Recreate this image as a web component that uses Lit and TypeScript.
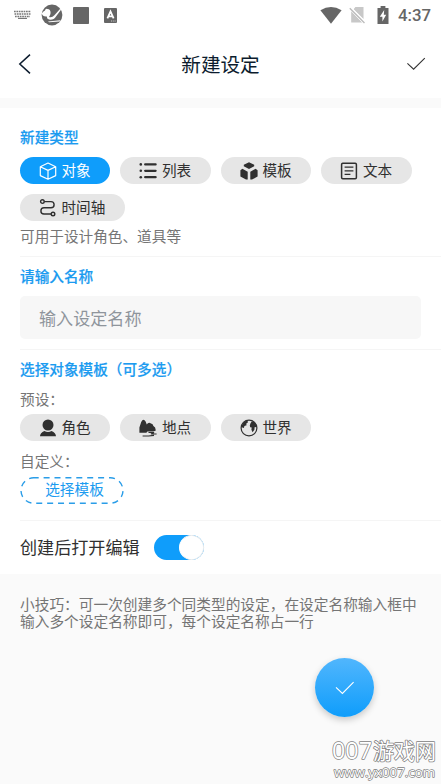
import { LitElement, html, css, svg } from "lit";
import { customElement, property } from "lit/decorators.js";

const icons: Record<string, unknown> = {
  cube: svg`<path d="M9 1 16.7 4.8V13.6L9 17.2 1.3 13.6V4.8ZM1.3 4.8 9 8.4 16.7 4.8M9 8.4V17.2" fill="none" stroke="currentColor" stroke-width="1.2" stroke-linejoin="round"/>`,
  list: svg`<path d="M6.2 2.4H16.6M6.2 8.8H16.6M6.2 15.2H16.6" stroke="currentColor" stroke-width="2.3" stroke-linecap="round"/><circle cx="1.8" cy="2.4" r="1.3"/><circle cx="1.8" cy="8.8" r="1.3"/><circle cx="1.8" cy="15.2" r="1.3"/>`,
  blocks: svg`<path d="M9 .2 14.2 2.8V4.2L9 7 3.8 4.2V2.8ZM.4 8.2 2.4 6.8 7.7 9.8V17.4H6L.4 14.6ZM17.6 8.2 15.6 6.8 10.3 9.8V17.4H12L17.6 14.6Z"/>`,
  doc: svg`<rect x="1.6" y="1.2" width="14.8" height="15.6" rx="1.2" fill="none" stroke="currentColor" stroke-width="1.5"/><path d="M4.6 5.2H13.4M4.6 8.8H13.4M4.6 12.4H10.4" stroke="currentColor" stroke-width="1.3"/>`,
  timeline: svg`<g fill="none" stroke="currentColor" stroke-width="1.4"><circle cx="3.4" cy="2.6" r="1.8"/><circle cx="14" cy="15" r="1.8"/><path d="M5.2 2.6H12A3.1 3.1 0 0 1 12 8.8H5A3.1 3.1 0 0 0 5 15H12.2"/></g>`,
  person: svg`<circle cx="9" cy="6" r="5.5"/><path d="M1 17.3C1 14.8 2.6 13.1 5.4 11.9Q9 14 12.6 11.9C15.4 13.1 17 14.8 17 17.3Z"/>`,
  place: svg`<path d="M.4 13.8V8.6L2.2 3Q4.4-1.5 6.6 2.6L7.8 5.6Q9.2 2.9 12 4.4Q14 4.5 14.4 7Q17 8 16.6 11.8L14.2 12.6H8.4L7.4 13.8Z"/><path d="M9.5 13.5H15L12 15H17.6M3.6 17H9.5L15 16.4" fill="none" stroke="currentColor" stroke-width="1.2"/>`,
  globe: svg`<circle cx="9" cy="9" r="7.9" fill="none" stroke="currentColor" stroke-width="1.2"/><path d="M2 6Q4 1.8 7.4 1.4L8 3.3 6.2 4.8 6.6 6.3 4.4 7.1 3.9 9.1 1.5 8.2ZM10.4 4.4 11.8 2.3 14.3 3 16.7 6.6 16.2 8 14.6 8.2 14.4 10.7 12.6 13.2 11.4 10.8 11.7 8.6 10.2 8.3 9.8 6.4Z"/>`,
};

@customElement("type-chip")
class TypeChip extends LitElement {
  @property() icon = "";
  @property() label = "";
  @property({ type: Boolean, reflect: true }) active = false;

  static styles = css`
    :host {
      display: flex;
      align-items: center;
      box-sizing: border-box;
      height: 27px;
      padding: 0 19.8px 0 18.9px;
      border-radius: 14px;
      background: #e6e6e6;
      color: #303030;
      font-size: 14.6px;
      line-height: 25px;
      white-space: nowrap;
    }
    :host([active]) {
      background: #0f9dfb;
      color: #fff;
    }
    svg {
      width: 18px;
      height: 18px;
      margin-right: 4.6px;
      fill: currentColor;
      flex: none;
    }
    span {
      height: 27px;
    }
  `;

  render() {
    return html`<svg viewBox="0 0 18 18">${icons[this.icon]}</svg><span>${this.label}</span>`;
  }
}

@customElement("app-root")
class AppRoot extends LitElement {
  static styles = css`
    :host {
      display: flex;
      flex-direction: column;
      position: relative;
      height: 784px;
      overflow: hidden;
      background: #fafafa;
      font-family: "Noto Sans CJK SC", sans-serif;
      color: #303030;
    }
    svg {
      display: block;
      flex: none;
    }
    .status {
      display: flex;
      align-items: center;
      justify-content: space-between;
      height: 30px;
      background: #fff;
      padding: 0 10px 0 14px;
    }
    .left,
    .right {
      display: flex;
      align-items: center;
      color: #666;
      fill: currentColor;
    }
    .bird {
      margin-left: 10px;
    }
    .square {
      margin-left: 10px;
    }
    .letter {
      margin-left: 15px;
    }
    .sim {
      margin-left: 7px;
    }
    .battery {
      margin-left: 11px;
    }
    .clock {
      font: 500 16.8px/30px Roboto, sans-serif;
      margin-left: 9px;
    }
    .header {
      display: flex;
      align-items: center;
      justify-content: space-between;
      height: 68px;
      background: #fff;
      padding: 0 15px 0 18px;
    }
    .title {
      font-size: 19.6px;
      line-height: 68px;
      height: 68px;
      color: #0c1c2e;
      margin-left: 3px;
    }
    .form {
      margin-top: 10px;
      height: 466px;
      box-sizing: border-box;
      padding: 19px 0 0 20px;
      background: #fff;
    }
    .heading {
      font-size: 14.65px;
      line-height: 20px;
      font-weight: 500;
      color: #1b9bf0;
      -webkit-text-stroke: 0.2px #1b9bf0;
    }
    .chips {
      display: flex;
      flex-wrap: wrap;
      gap: 10px;
      margin-top: 10px;
    }
    .heading.next {
      margin-top: 9px;
    }
    .hint {
      font-size: 14.65px;
      line-height: 20px;
      margin-top: 10px;
      color: #757575;
    }
    .hint.about {
      margin: 5px 0 10px;
    }
    .chips.presets {
      margin-top: 5px;
    }
    .rule {
      height: 1px;
      background: #f5f5f5;
    }
    .rule.last {
      margin-top: 16px;
    }
    .input {
      margin: 10px 20px 10px 0;
      height: 43px;
      box-sizing: border-box;
      padding-left: 19px;
      border-radius: 5px;
      background: #f7f7f7;
      font-size: 17.1px;
      line-height: 43px;
      color: #8f959c;
    }
    .pick {
      position: relative;
      width: 104px;
      height: 27px;
      margin-top: 6px;
      font-size: 14.65px;
      line-height: 24px;
      text-align: center;
      text-indent: 5px;
      color: #1b9bf0;
    }
    .pick svg {
      position: absolute;
      inset: 0;
    }
    .toggle-row {
      display: flex;
      align-items: center;
      height: 53px;
      font-size: 17.1px;
      line-height: 24px;
    }
    .toggle-row span {
      height: 26px;
    }
    .switch {
      display: flex;
      justify-content: flex-end;
      width: 50px;
      height: 25px;
      margin-left: 14px;
      border-radius: 13px;
      background: #0f9dfb;
    }
    .knob {
      width: 25px;
      height: 25px;
      box-sizing: border-box;
      border-radius: 50%;
      background: #fff;
      border: 1px solid #eee;
      border-left-color: #fff;
    }
    .tip {
      padding: 21px 0 0 20px;
      font-size: 14.7px;
      line-height: 17px;
      color: #757575;
      white-space: nowrap;
    }
    .fab {
      position: absolute;
      left: 315px;
      top: 658px;
      width: 59px;
      height: 59px;
      border-radius: 50%;
      background: linear-gradient(#51b6fd, #0f9dfb);
      box-shadow: 0 3px 7px rgba(0, 0, 0, 0.2);
      display: grid;
      place-items: center;
    }
    .mark {
      position: absolute;
      left: 325px;
      top: 733px;
    }
  `;

  render() {
    return html`
      <div class="status">
        <div class="left">
          <svg width="17" height="10" viewBox="0 0 17 10">
            <path d="M0 1.5H17M0.5 4H16.5M1 6.5H16" fill="none" stroke="#777" stroke-width="1.7" stroke-dasharray="1.7 .7" />
            <path d="M4 8.4H13" stroke="#777" stroke-width="1.2" />
          </svg>
          <svg class="bird" width="22" height="22" viewBox="0 0 22 22">
            <circle cx="11" cy="11" r="10.4" />
            <path d="M.8 9.4Q2 7.6 4 6.4 4.4 4.4 6.4 5 9.6 5 9.6 9 9.4 11 8 13 11 14 13.4 11.2L19 5 20.2 5.4 15 12.4Q12.6 16.4 8 15.6 5.6 14.6 5.8 12.4 1.6 12.8.8 9.4ZM7 17.6 19.4 16.2 18.6 17.4 8 18.2Z" fill="#fff" />
          </svg>
          <svg class="square" width="16" height="17" viewBox="0 0 16 17"><rect width="16" height="17" rx=".8" /></svg>
          <svg class="letter" width="13" height="15" viewBox="0 0 13 15">
            <rect width="13" height="15" rx="1" />
            <path d="M3.4 10.4 6.5 3.5 9.6 10.4M4.6 8.3H8.4" fill="none" stroke="#fff" stroke-width="1.8" />
            <path d="M7 13H12" stroke="#ccc" stroke-width="1" stroke-dasharray="1 .8" />
          </svg>
        </div>
        <div class="right">
          <svg width="22" height="17" viewBox="0 0 22 17"><path d="M.4 3.2Q11-3 21.6 3.2L11 16.8Z" /></svg>
          <svg class="sim" width="17" height="18" viewBox="0 0 17 18">
            <path d="M6.4 1H14.5V13L4.6 3.2ZM2.2 5 13.4 16.5H2.2Z" fill="#c8c8c8" />
            <path d="M.8 1.6 15.8 17" stroke="#fff" stroke-width="3" />
            <path d="M.8 2.2 15.5 17" stroke="#bbb" stroke-width="1.3" />
          </svg>
          <svg class="battery" width="12" height="18" viewBox="0 0 12 18">
            <path d="M3.6 0H8.4V2H11.5V18H.5V2H3.6Z" />
            <path d="M7.2 4 2.8 10.8H5.4V15.6L9.2 8.8H6.8Z" fill="#fff" />
          </svg>
          <span class="clock">4:37</span>
        </div>
      </div>

      <div class="header">
        <svg width="14" height="22" viewBox="0 0 14 22"><path d="M12 1.6 1.8 11 12 20.4" fill="none" stroke="#0c1c2e" stroke-width="1.5" /></svg>
        <div class="title">新建设定</div>
        <svg width="20" height="16" viewBox="0 0 20 16"><path d="M1.4 7.4 7.6 13.2 18.8 2.2" fill="none" stroke="#333" stroke-width="1.1" /></svg>
      </div>

      <div class="form">
        <div class="heading">新建类型</div>
        <div class="chips">
          <type-chip active icon="cube" label="对象"></type-chip>
          <type-chip icon="list" label="列表"></type-chip>
          <type-chip icon="blocks" label="模板"></type-chip>
          <type-chip icon="doc" label="文本"></type-chip>
          <type-chip icon="timeline" label="时间轴"></type-chip>
        </div>
        <div class="hint about">可用于设计角色、道具等</div>
        <div class="rule"></div>
        <div class="heading next">请输入名称</div>
        <div class="input">输入设定名称</div>
        <div class="rule"></div>
        <div class="heading next">选择对象模板（可多选）</div>
        <div class="hint">预设：</div>
        <div class="chips presets">
          <type-chip icon="person" label="角色"></type-chip>
          <type-chip icon="place" label="地点"></type-chip>
          <type-chip icon="globe" label="世界"></type-chip>
        </div>
        <div class="hint">自定义：</div>
        <div class="pick">
          <svg width="104" height="27"><rect x="1" y=".8" width="102" height="25.4" rx="12.7" fill="none" stroke="#2a9de8" stroke-width="1.4" stroke-dasharray="6 4.9" stroke-dashoffset="1" /></svg>
          选择模板
        </div>
        <div class="rule last"></div>
        <div class="toggle-row">
          <span>创建后打开编辑</span>
          <div class="switch"><div class="knob"></div></div>
        </div>
      </div>

      <div class="tip">
        <div>小技巧：可一次创建多个同类型的设定，在设定名称输入框中</div>
        <div>输入多个设定名称即可，每个设定名称占一行</div>
      </div>

      <div class="fab">
        <svg width="20" height="14" viewBox="0 0 20 14"><path d="M1 6.4 7.4 12.4 18.6 1.2" fill="none" stroke="#fff" stroke-width="1.1" /></svg>
      </div>

      <svg class="mark" width="116" height="51" fill="#fff" stroke="#808080" stroke-width="1.5" paint-order="stroke" stroke-linejoin="round">
        <text x="7" y="26" font-size="24" font-family="'Open Sans', sans-serif" textLength="40" lengthAdjust="spacingAndGlyphs">007</text>
        <text x="48" y="26" font-size="21.5" font-family="'Noto Sans CJK SC', sans-serif" textLength="63" lengthAdjust="spacingAndGlyphs">游戏网</text>
        <text x="9" y="44" font-size="13.5" font-family="'Open Sans', sans-serif" stroke-width="1.4" textLength="101" lengthAdjust="spacingAndGlyphs">www.yx007.com</text>
      </svg>
    `;
  }
}
